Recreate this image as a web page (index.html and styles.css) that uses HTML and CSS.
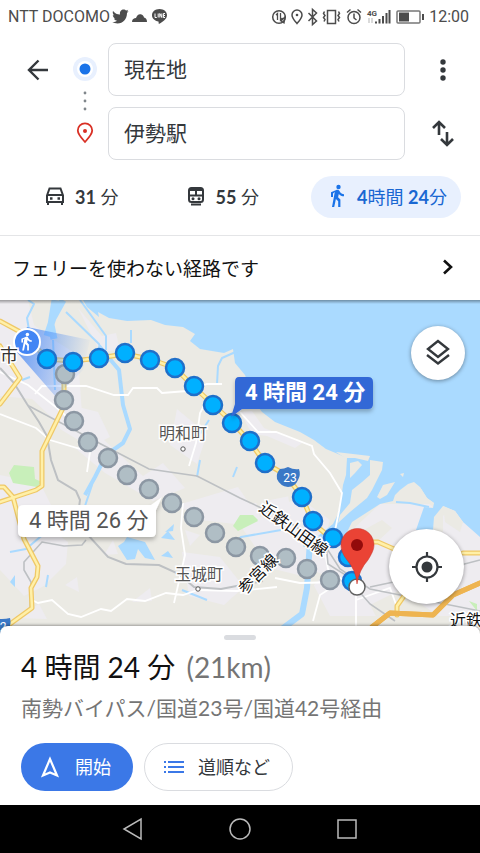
FILE: index.html
```html
<!DOCTYPE html>
<html lang="ja">
<head>
	<title>経路</title>
	<meta charset="utf-8">
	<meta name="viewport" content="width=device-width, initial-scale=1">
	<link rel="stylesheet" href="styles.css">
</head>
<body>
	<div class="status">
		<span>NTT DOCOMO</span>
		<svg class="apps" width="56" height="18" viewBox="0 0 56 18" fill="#4c4c4c">
			<path d="M1 3c2 2.500 4 3.500 7 3.500C7.500 3 9.500 1.500 11.500 1.500c1.200 0 2 .5 2.700 1.100l2-.8-1.200 1.800 1.600-.3-1.600 1.700C15 11 11 15.500 5.500 15.500c-2 0-3.800-.5-5.200-1.400 2 .1 3.500-.4 4.800-1.300-1.500-.1-2.600-1-3.100-2.300h1.400C1.900 10 .9 8.600.8 7l1.500.4C.8 6.200.4 4.400 1 3z"/>
			<path d="M20 14c0-3 2-4 4-4 1-3 3-4.500 5.500-3.500 1.500.5 2.200 1.500 2.500 3 2 .3 3 2 3 4.500z"/>
			<path d="M47.500 1C43 1 40 3.800 40 7.300c0 3.200 2.700 5.600 6.500 6.200l.3 2.500c4-2 8.200-5 8.200-8.700C55 3.800 52 1 47.500 1z"/>
			<path d="M43 5.500v4h1.800M46.200 5.500v4M47.800 9.500v-4l2 4v-4M53 5.500h-1.600v4H53M51.500 7.500H53" fill="none" stroke="#fff"/>
		</svg>
		<svg class="system" width="154" height="20" viewBox="0 0 154 20" fill="none" stroke="#4c4c4c" stroke-width="1.500">
			<circle cx="8" cy="10" r="6.300"/>
			<path d="M5 8l1.500-1.500V13M9.500 6v7l2-2M10 14l4-4-1 6z" stroke-width="1.300"/>
			<path d="M26 16.500c-3-3.500-5-5.500-5-8.500a5 5 0 0 1 10 0c0 3-2 5-5 8.500z"/>
			<circle cx="26" cy="8" r="1.300" fill="#4c4c4c" stroke="none"/>
			<path d="M37.500 6l8 8-4 3.500v-15l4 3.500-8 8"/>
			<path d="M56.500 3.500h8v13h-8zM53.500 4.500l-1 2 1.500 2-1.500 2 1.500 2-1 2M67.500 4.500l1 2-1.500 2 1.500 2-1.500 2 1 2"/>
			<circle cx="83" cy="10.500" r="6"/>
			<path d="M83 6.500v4.500l2.500 2M76 5.500l3.500-3M90 5.500l-3.500-3"/>
			<path d="M105 16.500v-2M108.500 16.500v-4.500M112 16.500V9M115.500 16.500V6M118.500 16.500V3" stroke-width="2"/>
			<text class="net" x="96" y="9">4G</text>
			<path d="M98 11v5M101 11v5" stroke="#b5b5b5" stroke-width="1"/>
			<rect x="126" y="4" width="23" height="12" rx="1" stroke="#777"/>
			<path d="M128 5.500h10v9h-10z" fill="#4c4c4c" stroke="none"/>
			<path d="M152 7v6" stroke-width="2"/>
		</svg>
		<span>12:00</span>
	</div>

	<form class="search">
		<button type="button" class="icon back" aria-label="戻る">
			<svg width="24" height="24" viewBox="0 0 24 24" fill="none" stroke="#34383c" stroke-width="2.400"><path d="M22 12H3M12.500 2.500L3 12l9.500 9.500"/></svg>
		</button>
		<svg class="stops" width="24" height="117" viewBox="0 0 24 117">
			<circle cx="12" cy="26" r="12" fill="#e8f0fe"/>
			<circle cx="12" cy="26" r="8" fill="#fff"/>
			<circle cx="12" cy="26" r="5.500" fill="#1a73e8"/>
			<g fill="#80868b"><circle cx="12" cy="50" r="1.400"/><circle cx="12" cy="58" r="1.400"/><circle cx="12" cy="66" r="1.400"/></g>
			<path d="M12 99c-4.500-5-7.200-7.800-7.200-11.500a7.200 7.200 0 0 1 14.400 0C19.200 91.200 16.500 94 12 99z" fill="none" stroke="#d93025" stroke-width="1.800"/>
			<circle cx="12" cy="88" r="2" fill="#d93025"/>
		</svg>
		<input class="from" type="text" value="現在地" aria-label="出発地">
		<button type="button" class="icon more" aria-label="メニュー">
			<svg width="24" height="24" viewBox="0 0 24 24" fill="#34383c"><circle cx="12" cy="4" r="2.700"/><circle cx="12" cy="12" r="2.700"/><circle cx="12" cy="20" r="2.700"/></svg>
		</button>
		<input class="to" type="text" value="伊勢駅" aria-label="目的地">
		<button type="button" class="icon swap" aria-label="入れ替え">
			<svg width="28" height="28" viewBox="0 0 28 28" fill="none" stroke="#34383c" stroke-width="2.600"><path d="M10 15V2.500M4 8l6-6 6 6M18 12v12.500M12 19l6 6 6-6"/></svg>
		</button>
	</form>

	<div class="modes">
		<button type="button" class="mode">
			<svg width="20" height="20" viewBox="0 0 20 20" fill="none" stroke="#34383c" stroke-width="2"><path d="M2 9.500L4.500 2.500h11L18 9.500V16H2zM2 9h16M3 15v4M17 15v4"/><path d="M5 12.500h2.500M12.500 12.500H15" stroke-width="2.500"/></svg>
			<span><b>31</b> 分</span>
		</button>
		<button type="button" class="mode">
			<svg width="20" height="20" viewBox="0 0 20 20" fill="none" stroke="#34383c" stroke-width="2"><path d="M5.500 2h9Q17 2 17 4.500v9q0 2.500-2.500 2.500h-9Q3 16 3 13.500v-9Q3 2 5.500 2zM3 4h14M3 9.500h14M10 4v5.500M5 18.500h10"/><circle cx="7" cy="12.800" r="1.500" fill="#34383c" stroke="none"/><circle cx="13" cy="12.800" r="1.500" fill="#34383c" stroke="none"/></svg>
			<span><b>55</b> 分</span>
		</button>
		<button type="button" class="mode active">
			<svg width="18" height="24" viewBox="0 0 18 24" fill="#1a73e8"><circle cx="10.500" cy="3" r="2.200"/><path d="M6.800 8L4 23h2.200l1.700-8 2.300 2.200V23h2.200v-7.500L10.100 13.200l.7-3.300c1.300 1.500 3 2.400 5.200 2.400v-2.100c-1.700 0-3.100-.9-3.900-2.200l-1-1.600c-.5-.7-1.300-.9-2.200-.6L3 8.300V13h2V9.500z"/></svg>
			<span><b>4</b>時間 <b>24</b>分</span>
		</button>
	</div>

	<a class="notice" href="#">
		<span>フェリーを使わない経路です</span>
		<svg width="14" height="18" viewBox="0 0 14 18" fill="none" stroke="#111" stroke-width="2.600"><path d="M3 2.500L10 9l-7 6.500"/></svg>
	</a>

	<div class="map">
		<svg class="canvas" viewBox="0 0 480 334" preserveAspectRatio="xMidYMin slice">
			<defs>
				<linearGradient id="beam" x1="0" y1="0.200" x2="1" y2="0.400">
					<stop offset="0" stop-color="#4285f4" stop-opacity=".8"/>
					<stop offset="1" stop-color="#4285f4" stop-opacity="0"/>
				</linearGradient>
				<linearGradient id="edge" x1="0" y1="0" x2="0" y2="1">
					<stop offset="0" stop-opacity=".35"/>
					<stop offset="1" stop-opacity="0"/>
				</linearGradient>
				<filter id="shadow" x="-20%" y="-30%" width="140%" height="190%"><feDropShadow dx="0" dy="3" stdDeviation="2" flood-opacity=".25"/></filter>
			</defs>
			<rect width="480" height="334" fill="#ebeae4"/>

			<!-- built-up areas -->
			<g fill="#eeecf0">
				<path d="M0 0l28 0 6 25 20 15 24 15 4 60-20 12-30-28L0 96zM78 8l24 28 14-3 4 17-20 2zM0 175l40 8 14 28-6 16 20 15-2 22-22 22-20 10L0 270z"/>
				<path d="M75 148l28-9 40 37 20-13 22 25-32 13-48-28zM170 145l7-36 30 25-10 30zM50 100l48 12 12 25-20 10-30-18zM178 205l60-18 15 22-18 15-35-4z"/>
				<path d="M240 112l12-1 12 17 38 15-7 5-28-12-15-2zM245 205l50-10 35 25-6 20 26-8 30-28 53 0-10 26 20 2 0-16 10-10 35 30v80H330l-20-38-40-10-30-43z"/>
				<path d="M125 215l14-8 4 9zM65 285l12-8 2 15zM132 302l18-14 2 13zM185 230l15 5-10 11zM182 252l38 5 24 30-20 18-35-9zM104 255l9-15 5 14zM14 318l25-14 8 15z"/>
			</g>
			<g fill="#ebeae4">
				<path d="M285 173l20 4 15 12-14 5-17 8zM253 190l18 15-11 13zM300 265l24 10-12 12zM360 232l22-12 10 8-16 15zM370 305l30-15 45 30-60 14z"/>
			</g>
			<g fill="#c8efba">
				<path d="M9 173l5-8 20 2 1 12 7 3-5 5-24-4zM233 226l7-11 13 0 5 5-20 11zM469 301l8 3 0 7zM240 218l10-3 8 6-18 9z"/>
			</g>

			<!-- sea -->
			<path fill="#aadaff" d="M83 0L87 7 99 17 98 12 109 18 127 21 151 20 165 25 183 27 195 34 190 41 200 49 224 53 233 49 235 63 245 75 255 103 262 112 275 122 300 132 314 140 326 149 338 154 347 158 346 175 343 185 341 200 338 214 333 224 318 236 345 236 352 222 366 213 380 204 393 201 395 195 400 190 408 184 414 182 420 187 427 198 434 203 433 208 424 207 416 230 433 230 434 217 443 206 455 211 463 222 480 237V0z"/>
			<g fill="#ebeae4">
				<path d="M336 152L370 156 368 161 355 158 345 158zM350 163L358 161 362 165 355 173 350 178zM370 160L383 162 382 170 372 190 367 198 350 212 338 223 340 215 350 203 352 190 362 182 370 175zM383 185L395 182 387 195 380 199 377 197zM400 174l4-1-1 4z"/>
			</g>
			<path fill="#ebeae4" d="M443 206L455 211 463 222 460 232 445 222zM420 187L427 198 434 203 432 206 424 199z"/>

			<!-- rivers -->
			<g fill="none" stroke="#aadaff" stroke-linejoin="round">
				<path d="M63 0L53 18l-6 18M55 0l-4 25 3 14" stroke-width="7"/>
				<path d="M28 0l6 4-7 14 2 12M66 12l33 32 3 11M80 0l26 36v14M240 50l-18 8-4 8-1 18M131 30v13M22 80l8-3M53 40l2 50" stroke-width="2"/>
				<path d="M99 46l20 24 4 35 7 24-7 14-17 12-11 22-10 18" stroke-width="4"/>
				<path d="M92 185l-10 30-12 12M10 252l16-3 20-17M200 134l9-14M237 167l-4 10M200 160l-3 17M46 287l2-12M182 290l25 10M281 230l-40 7-6 6M318 219l-3 10M396 202l14 1 19 4" stroke-width="2"/>
				<path d="M335 228l-12 12-20 3" stroke-width="8"/>
				<path d="M310 240l-3 48-5 26-20 15-15 5" stroke-width="6"/>
			</g>
			<path fill="#aadaff" d="M118 246l6-4 3-5 18 5 10 18-10-2-7-9-3 10-8 1zM161 238l7-7 7 9zM161 256l7-5 5 7zM165 232l9-8-1 7zM10 282l5-7 0 12z"/>

			<!-- minor roads and rail -->
			<g fill="none" stroke="#fff" stroke-width="1.800">
				<path d="M0 72l28 13 34 27 9 10M35 94l7-8h44l28 9h14l5-7h24l5 5 25-2 20-7 15 0M0 114l36 14 14 12 40 12-3 20M30 299l8 4 14-3 16 14 13 3 20-8 10 2 16-12 18 2 21-8 17 2 15-5 39 1 40-4M210 95l-10 18-4 30-7 23M183 203l-2 25 4 27-11 48M240 112l18 20 18 0 36 14 2 8 16 19 12 20-3 18-5 25-6 12"/>
				<path d="M275 278l25 5 40-1M340 282l-20 13-7 26M356 292v38M356 300l34-12 8 22M324 247l4 22 25 18"/>
			</g>
			<g fill="none" stroke="#bdc0c3" stroke-width="2">
				<path d="M0 68l14 15 13 21 12 18 8 14 4 24 7 20 18 11 4 9-2 15 9 19 21 23 18 7 33 1 20 9 15 13 27 2 42-8"/>
				<path d="M29 106l68 36 52 27 48 7 43 22 43 20 43 29 14 22 30 20 110 22M86 240l-4 5-18 1-22-4-18 20 0 8 7 12-1 28-14 8M325 234l3 30 16 10 26 30 25 17M370 287l33-7 77-20" stroke-width="1.600"/>
			</g>

			<!-- main roads -->
			<g fill="none" stroke-linejoin="round" stroke-linecap="round">
				<g stroke="#efc866" stroke-width="5">
					<path id="road-a" d="M0 21l24 13 23 25 26 2 26-3 26-4 25 5 25 9 19 19 38 35 18 20 15 21 21 12 16 22 11 26 20 17"/>
					<path id="road-b" d="M64 78v28L42 151v35l-6 4L0 202M0 187h4l9 10 11 42 14 27-1 11-6 11 1 20-22 16"/>
					<path id="road-c" d="M0 46l20 32L0 104M348 255l12-13 18 0 16 7M463 253h17"/>
					<path id="road-e" d="M397 315v-9l7-10"/>
				</g>
				<g stroke="#fff0a8" stroke-width="2.500">
					<use href="#road-a"/><use href="#road-b"/><use href="#road-c"/><use href="#road-e"/>
				</g>
				<path id="road-d" d="M372 327l18-14 43 2 20-20 27-12" stroke="#eeb450" stroke-width="5"/>
				<use href="#road-d" stroke="#fcd07c"/>
			</g>

			<path d="M27 27l63 13-7 30-27 27L15 50z" fill="url(#beam)"/>

			<g fill="#b0bec5" stroke="#8c97a3" stroke-width="2.500">
				<circle cx="65" cy="74" r="9"/><circle cx="64" cy="100" r="9"/><circle cx="74" cy="121" r="9"/><circle cx="88" cy="142" r="9"/><circle cx="108" cy="158" r="9"/><circle cx="127" cy="175" r="9"/><circle cx="149" cy="189" r="9"/><circle cx="172" cy="203" r="9"/><circle cx="194" cy="217" r="9"/><circle cx="215" cy="233" r="9"/><circle cx="236" cy="247" r="9"/><circle cx="260" cy="256" r="9"/><circle cx="286" cy="258" r="9"/><circle cx="307" cy="269" r="9"/><circle cx="330" cy="280" r="9"/>
			</g>
			<g fill="#00b0ff" stroke="#1f6fc9" stroke-width="2.500">
				<circle cx="47" cy="59" r="9"/><circle cx="73" cy="62" r="9"/><circle cx="99" cy="58" r="9"/><circle cx="125" cy="53" r="9"/><circle cx="150" cy="60" r="9"/><circle cx="175" cy="68" r="9"/><circle cx="194" cy="86" r="9"/><circle cx="213" cy="105" r="9"/><circle cx="232" cy="123" r="9"/><circle cx="250" cy="141" r="9"/><circle cx="265" cy="163" r="9"/><circle cx="302" cy="197" r="9"/><circle cx="313" cy="221" r="9"/><circle cx="333" cy="238" r="9"/><circle cx="348" cy="257" r="9"/><circle cx="352" cy="281" r="9"/>
			</g>

			<circle cx="27" cy="42" r="13" fill="#4285f4" stroke="#fff" stroke-width="2"/>
			<g transform="translate(19 32) scale(.8)" fill="#fff"><circle cx="10.500" cy="3" r="2.200"/><path d="M6.800 8L4 23h2.200l1.700-8 2.300 2.200V23h2.200v-7.500L10.100 13.200l.7-3.300c1.300 1.500 3 2.400 5.200 2.400v-2.100c-1.700 0-3.100-.9-3.900-2.200l-1-1.600c-.5-.7-1.300-.9-2.200-.6L3 8.300V13h2V9.500z"/></g>

			<!-- route shields -->
			<path d="M280 169q4 0 8-2 6 3 11 2 2 6-1 11-3 7-10 7-8-1-11-8-1-6 3-10z" fill="#3a78c6"/>
			<text class="shield" x="290" y="182">23</text>
			<path d="M-6 318q8 2 16 0 2 8-3 16H-6z" fill="#3a78c6"/>
			<text class="shield" x="3" y="331">2</text>

			<!-- place names -->
			<text class="place dark" x="0" y="62">市</text>
			<text class="place" x="159" y="139">明和町</text>
			<circle cx="183" cy="149" r="2.200" fill="#fff" stroke="#555"/>
			<text class="place" x="175" y="280">玉城町</text>
			<circle cx="198" cy="289" r="2.200" fill="#fff" stroke="#555"/>
			<text class="rail" transform="translate(258 210) rotate(36)">近鉄山田線</text>
			<text class="rail" transform="translate(245 295) rotate(-45)">参宮線</text>
			<text class="rail" x="450" y="326">近鉄</text>

			<!-- time callouts -->
			<g filter="url(#shadow)">
				<path d="M239 77h129q5 0 5 5v22q0 5-5 5H242l-11 8 4-13V82q0-5 4-5z" fill="#3367d6"/>
				<path d="M24 205h127l11-8-6 13v22q0 5-5 5H24q-6 0-6-5v-22q0-5 6-5z" fill="#fff"/>
			</g>
			<text class="callout best" x="245" y="100">4 時間 24 分</text>
			<text class="callout" x="29" y="228">4 時間 26 分</text>

			<circle cx="357" cy="287" r="8" fill="#fff" stroke="#606060" stroke-width="1.500"/>
			<path d="M357 284q-1-14-10-24c-4-5-6-10-6-15a16.500 16.500 0 0 1 33 0c0 5-3 10-6 15q-9 10-11 24z" fill="#ea4335" stroke="#c5342a" stroke-width=".5"/>
			<circle cx="357" cy="245" r="6" fill="#930b0b"/>
			<rect width="480" height="4" fill="url(#edge)"/>
		</svg>
		<button type="button" class="round layers" aria-label="地図の種類">
			<svg width="30" height="30" viewBox="0 0 30 30" fill="none" stroke="#34383c" stroke-width="2.400"><path d="M15 3L5 11l10 8 10-8zM4 17l11 8.500L26 17"/></svg>
		</button>
		<button type="button" class="round locate" aria-label="現在地を表示">
			<svg width="30" height="30" viewBox="0 0 30 30" fill="none" stroke="#34383c" stroke-width="2.200"><circle cx="15" cy="15" r="10.500"/><circle cx="15" cy="15" r="5.500" fill="#34383c" stroke="none"/><path d="M15 0v5M15 25v5M0 15h5M25 15h5"/></svg>
		</button>
	</div>

	<div class="sheet">
		<div class="handle"></div>
		<h1>4 時間 24 分 <span>(21km)</span></h1>
		<p>南勢バイパス/国道23号/国道42号経由</p>
		<div class="actions">
			<button type="button" class="pill start">
				<svg width="20" height="24" viewBox="0 0 20 24" fill="none" stroke="#fff" stroke-width="2.200"><path d="M10 4L3 20.500l7-3 7 3z"/></svg>
				<span>開始</span>
			</button>
			<button type="button" class="pill steps">
				<svg width="22" height="14" viewBox="0 0 22 14" fill="none" stroke="#3b78e7" stroke-width="2"><path d="M5 2h16M5 7h16M5 12h16M1 2h2M1 7h2M1 12h2"/></svg>
				<span>道順など</span>
			</button>
		</div>
	</div>

	<div class="navbar">
		<button type="button" aria-label="戻る"><svg width="24" height="24" viewBox="0 0 24 24"><path d="M20 2v20L3 12z"/></svg></button>
		<button type="button" aria-label="ホーム"><svg width="24" height="24" viewBox="0 0 24 24"><circle cx="12" cy="12" r="10"/></svg></button>
		<button type="button" aria-label="アプリ履歴"><svg width="24" height="24" viewBox="0 0 24 24"><path d="M3 3h18v18H3z"/></svg></button>
	</div>
</body>
</html>
```

FILE: styles.css
```css
* {
	box-sizing: border-box;
}
body {
	display: flex;
	flex-direction: column;
	min-height: 100vh;
	margin: 0;
	background: #fff;
	color: #34383c;
	font-family: Lato, "Noto Sans CJK JP", sans-serif;
}
button {
	border: 0;
	padding: 0;
	background: none;
	color: inherit;
	font-family: inherit;
	cursor: pointer;
}
svg {
	display: block;
	flex-shrink: 0;
}
.status {
	display: flex;
	align-items: center;
	height: 33px;
	padding: 0 11px 0 8px;
	color: #4c4c4c;
	font: 16px Roboto, sans-serif;
}
.apps {
	margin-left: 2px;
}
.system {
	margin-left: auto;
	margin-right: 4px;
}
.net {
	fill: #4c4c4c;
	stroke: none;
	font: bold 8px Roboto, sans-serif;
}

.search {
	display: grid;
	grid-template-columns: 48px 46px 1fr 75px;
	grid-template-rows: 53px 53px;
	row-gap: 11px;
	padding: 10px 0 0 14px;
}
.search input {
	grid-column: 3;
	width: 100%;
	min-width: 0;
	padding: 0 15px 4px;
	border: 1px solid #dadce0;
	border-radius: 8px;
	background: #fff;
	color: #34383c;
	font: 21px "Noto Sans CJK JP", sans-serif;
}
.icon {
	display: flex;
	align-items: center;
	justify-content: center;
}
.stops {
	grid-column: 2;
	grid-row: 1 / 3;
	justify-self: center;
}
.from, .back, .more {
	grid-row: 1;
}
.to, .swap {
	grid-row: 2;
}
.more, .swap {
	grid-column: 4;
}

.modes {
	display: flex;
	align-items: center;
	justify-content: space-between;
	padding: 16px 19px 17px 30px;
	border-bottom: 1px solid #e4e5e7;
}
.mode {
	display: flex;
	align-items: center;
	gap: 10px;
	height: 42px;
	padding: 0 15px 2px;
	border-radius: 21px;
	font-size: 18px;
	white-space: nowrap;
}
.mode.active {
	gap: 11px;
	padding: 0 14px 2px 17px;
	background: #e8f0fe;
	color: #1967d2;
}

.notice {
	display: flex;
	align-items: center;
	justify-content: space-between;
	height: 64px;
	padding: 0 25px 2px 12px;
	color: #111;
	font-size: 19px;
	text-decoration: none;
}

.map {
	position: relative;
	flex: 1;
	min-height: 334px;
	margin-bottom: -8px;
	overflow: hidden;
	background: #ebeae4;
}
.canvas {
	position: absolute;
	width: 100%;
	height: 100%;
}
.place {
	fill: #555;
	stroke: #fff;
	stroke-width: 3px;
	paint-order: stroke;
	font: 16px "Noto Sans CJK JP", sans-serif;
}
.dark {
	fill: #333;
	font-size: 18px;
}
.rail {
	fill: #111;
	stroke: #fff;
	stroke-width: 3px;
	paint-order: stroke;
	font: 16px "Noto Sans CJK JP", sans-serif;
}
.shield {
	fill: #fff;
	font: 12px Roboto, sans-serif;
	text-anchor: middle;
}
.callout {
	fill: #555;
	font: 22px Roboto, "Noto Sans CJK JP", sans-serif;
}
.best {
	fill: #fff;
	font-weight: bold;
}
.round {
	position: absolute;
	display: flex;
	align-items: center;
	justify-content: center;
	border-radius: 50%;
	background: #fff;
	box-shadow: 0 1px 4px rgba(0, 0, 0, .4);
}
.layers {
	top: 26px;
	right: 15px;
	width: 54px;
	height: 54px;
}
.locate {
	right: 16px;
	bottom: 30px;
	width: 75px;
	height: 75px;
}

.sheet {
	position: relative;
	padding: 9px 21px 14px;
	border-radius: 8px 8px 0 0;
	background: #fff;
	box-shadow: 0 -1px 3px rgba(0, 0, 0, .35);
}
.handle {
	width: 32px;
	height: 5px;
	margin: 0 auto;
	border-radius: 3px;
	background: #dadce0;
}
.sheet h1 {
	margin: 8px 0 0;
	color: #111;
	font-size: 28px;
	font-weight: normal;
	line-height: 38px;
}
.sheet h1 span {
	margin-left: 4px;
	color: #757575;
}
.sheet p {
	margin: 6px 0 19px;
	color: #757575;
	font-size: 21px;
	line-height: 32px;
}
.actions {
	display: flex;
	gap: 11px;
}
.pill {
	display: flex;
	align-items: center;
	height: 48px;
	border-radius: 24px;
	font-size: 18px;
}
.pill span {
	padding-bottom: 3px;
}
.start {
	gap: 15px;
	padding: 0 22px 0 19px;
	background: #3b78e7;
	color: #fff;
}
.steps {
	gap: 13px;
	padding: 0 22px 0 18px;
	border: 1px solid #dadce0;
}

.navbar {
	display: flex;
	justify-content: center;
	gap: 83px;
	height: 48px;
	background: #000;
}
.navbar svg {
	fill: none;
	stroke: #bbb;
	stroke-width: 1.5px;
}
```
